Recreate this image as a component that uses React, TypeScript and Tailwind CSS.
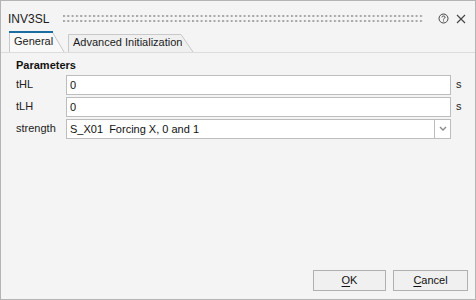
import React from "react"

const font = { fontFamily: '"Liberation Sans", Arial, sans-serif' }

const Dots = () => (
  <svg className="flex-1 h-[9px] ml-[14px] mr-[8px]" aria-hidden>
    <defs>
      <pattern id="grip" width="4.3" height="5" patternUnits="userSpaceOnUse">
        <rect x="0" y="1" width="2" height="2" fill="#a6a6a6" />
      </pattern>
    </defs>
    <rect width="100%" height="9" fill="url(#grip)" />
  </svg>
)

const Tab = ({ label, active, width }: { label: string; active?: boolean; width: number }) => (
  <div className={`relative flex items-end whitespace-nowrap ${active ? "h-[21px] pl-[5px]" : "h-[18px] pl-[5px] ml-[3px]"}`} style={{ width }}>
    <svg className="absolute inset-0 w-full h-full overflow-visible" aria-hidden>
      <path
        d={`M0.5 ${active ? 21 : 18} V0.5 H${width - 13} L${width - 1} ${active ? 21 : 18}`}
        fill={active ? "#f9f9f9" : "#f0f0f0"}
        stroke="#c8c8c8"
        strokeWidth="1"
      />
      {active && <rect x="0" y="0" width={width - 12} height="2" fill="#1a6fa0" />}
    </svg>
    <span className={`relative text-[11px] text-[#1b1b1b] leading-none ${active ? "pb-[5px]" : "pb-[4px]"}`}>{label}</span>
  </div>
)

const Field = ({ label, value, unit, select }: { label: string; value: string; unit?: boolean; select?: boolean }) => (
  <div className="flex items-center h-[20px]">
    <span className="w-[50px] text-[11px] text-[#222]">{label}</span>
    <div className="w-[385px] h-[20px] flex bg-white border border-[#bdbdbd]">
      <span className="flex-1 pl-[3px] text-[11px] leading-[18px] text-[#111] whitespace-pre">{value}</span>
      {select && (
        <div className="w-[16px] border-l border-[#bdbdbd] flex items-center justify-center">
          <svg width="8" height="6" viewBox="0 0 8 6" aria-hidden>
            <path d="M1 1 L4 4 L7 1" stroke="#8a8a8a" strokeWidth="1.4" fill="none" />
          </svg>
        </div>
      )}
    </div>
    {unit && <span className="ml-[5px] text-[11px] text-[#222]">s</span>}
  </div>
)

const Btn = ({ mnemonic, rest, width }: { mnemonic: string; rest: string; width: number }) => (
  <button className="h-[21px] border border-[#b0b0b0] bg-[#f0f0f0] text-[11px] text-[#111] leading-none" style={{ width }}>
    <span className="underline underline-offset-2">{mnemonic}</span>
    {rest}
  </button>
)

export default function App() {
  return (
    <div className="w-[476px] h-[300px] border border-[#b4b4b4] bg-[#f4f4f4] flex flex-col" style={font}>
      <div className="h-[30px] flex items-center pl-[7px] pr-[9px] pt-[5px]">
        <span className="text-[12px] text-[#1b1b1b]">INV3SL</span>
        <Dots />
        <svg width="11" height="11" viewBox="0 0 11 11" className="ml-[6px]" aria-hidden>
          <circle cx="5.5" cy="5.5" r="4.5" stroke="#444" strokeWidth="1" fill="none" />
          <path d="M3.9 4.3 C3.9 2.6 7.1 2.6 7.1 4.2 C7.1 5.3 5.5 5.3 5.5 6.5" stroke="#444" strokeWidth="1" fill="none" />
          <rect x="5" y="7.4" width="1" height="1" fill="#444" />
        </svg>
        <svg width="10" height="10" viewBox="0 0 10 10" className="ml-[7px]" aria-hidden>
          <path d="M1 1 L9 9 M9 1 L1 9" stroke="#444" strokeWidth="1.1" />
        </svg>
      </div>

      <div className="flex items-end pl-[8px] border-b border-[#dcdcdc]">
        <Tab label="General" active width={56} />
        <Tab label="Advanced Initialization" width={126} />
      </div>

      <div className="flex flex-col pl-[15px] pt-[4px]">
        <span className="text-[11px] font-bold text-[#111] mb-[1px]">Parameters</span>
        <div className="flex flex-col gap-[2px]">
          <Field label="tHL" value="0" unit />
          <Field label="tLH" value="0" unit />
          <Field label="strength" value="S_X01  Forcing X, 0 and 1" select />
        </div>
      </div>

      <div className="flex-1" />

      <div className="flex justify-end gap-[7px] pr-[7px] pb-[8px]">
        <Btn mnemonic="O" rest="K" width={73} />
        <Btn mnemonic="C" rest="ancel" width={75} />
      </div>
    </div>
  )
}
